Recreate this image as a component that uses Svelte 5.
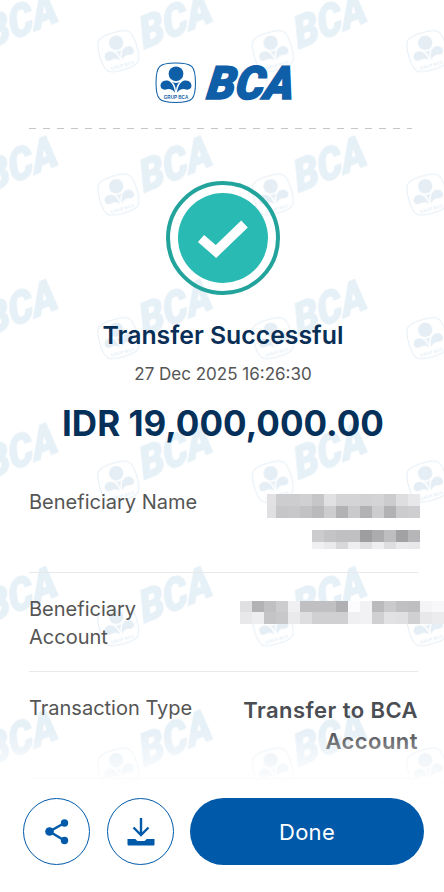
<script lang="ts">
  const nameTop = [
    [226, 205, 205, 208, 198, 225, 212, 212, 210, 212, 204, 222, 232],
    [224, 198, 200, 194, 186, 205, 178, 202, 178, 205, 178, 204, 206]
  ]
  const nameBottom = [
    [204, 196, 192, 192, 158, 172, 190, 162, 182],
    [240, 234, 216, 238, 224, 238, 222, 234, 232]
  ]
  const account = [
    [224, 178, 192, 204, 240, 192, 192, 192, 176, 252, 242, 186, 202, 192, 190, 244, 248],
    [232, 238, 196, 200, 234, 222, 208, 208, 208, 240, 242, 208, 226, 224, 208, 232, 236]
  ]

  const shade = (v: number) => `rgb(${v},${v},${Math.min(255, v + 2)})`
</script>

{#snippet pixels(rows: number[][], kind: string)}
  <div class="pixels {kind}">
    {#each rows as row}
      <div class="px-row">
        {#each row as v}
          <span style="background:{shade(v)}"></span>
        {/each}
      </div>
    {/each}
  </div>
{/snippet}

{#snippet emblem(color: string)}
  <path d="M20 1C28 1 33 1.500 36 4.500C39 7.500 39.500 13 39.500 20.500C39.500 28 39 33 36 36C33 39 27 39.500 20 39.500C13 39.500 7.500 39 4.500 36C1.500 33 1 28 1 20.500C1 13 1.500 7.500 4.500 4.500C7.500 1.500 12 1 20 1Z" fill="none" stroke={color} stroke-width="1" />
  <circle cx="20.500" cy="11.500" r="7.200" fill={color} />
  <path d="M19.500 30C19 25 17 19 12 18C7 17.500 5 21 5.500 24C6 27 9 27.500 12 26.500C15 26 18 27.500 19.500 30Z" fill={color} />
  <path d="M21.500 30C22 25 24 19 29 18C34 17.500 36 21 35.500 24C35 27 32 27.500 29 26.500C26 26 23 27.500 21.500 30Z" fill={color} />
  <path d="M20.500 28C20 23 18.500 20.500 16 19C17 19.500 19 20.500 20.500 20.500C22 20.500 24 19.500 25 19C22.500 20.500 21 23 20.500 28Z" fill={color} />
{/snippet}

<main class="page">
  <svg class="watermark" width="444" height="892" aria-hidden="true">
    <defs>
      <pattern id="tile" x="95" y="-15" width="154.500" height="143.500" patternUnits="userSpaceOnUse">
        <g transform="translate(3 46) rotate(-16 20 20)" opacity="0.3">
          {@render emblem('#a9c6de')}
          <text x="20.500" y="36.500" class="mark-grup" fill="#a9c6de">GRUP BCA</text>
        </g>
        <g transform="translate(49 64) rotate(-22) skewX(-8)">
          <text class="mark-bca" textLength="76" lengthAdjust="spacingAndGlyphs">BCA</text>
        </g>
      </pattern>
    </defs>
    <rect width="444" height="892" fill="url(#tile)" />
  </svg>

  <div class="content">
    <header class="brand">
      <svg width="42" height="42" viewBox="0 0 41 41" aria-hidden="true">
        {@render emblem('#0f5ea8')}
        <text x="20.500" y="36.500" class="grup">GRUP BCA</text>
      </svg>
      <svg class="wordmark" width="96" height="42" aria-label="BCA">
        <g transform="translate(3 37) skewX(-8)">
          <text class="bca" textLength="87" lengthAdjust="spacingAndGlyphs">BCA</text>
        </g>
      </svg>
    </header>

    <div class="dash"></div>

    <section class="status">
      <div class="ring">
        <div class="disc">
          <svg width="52" height="40" viewBox="0 0 52 40" aria-hidden="true">
            <path d="M4 20.500L19 33.500L47.500 6" fill="none" stroke="#fff" stroke-width="9.500" />
          </svg>
        </div>
      </div>
      <h1>Transfer Successful</h1>
      <p class="date">27 Dec 2025 16:26:30</p>
      <p class="amount">IDR 19,000,000.00</p>
    </section>

    <section class="rows">
      <div class="row name">
        <span class="label">Beneficiary Name</span>
        <div class="values">
          {@render pixels(nameTop, 'name-top')}
          {@render pixels(nameBottom, 'name-bottom')}
        </div>
      </div>
      <div class="row acct">
        <span class="label">Beneficiary<br />Account</span>
        <div class="values">
          {@render pixels(account, 'acct-px')}
        </div>
      </div>
      <div class="row type">
        <span class="label">Transaction Type</span>
        <div class="value-text">
          <strong>Transfer to BCA</strong>
          <strong>Account</strong>
        </div>
      </div>
    </section>

    <footer class="actions">
      <button class="round" aria-label="Share">
        <svg width="26" height="26" viewBox="0 0 26 26" aria-hidden="true">
          <path d="M20.500 4L5.500 12.500L20.500 21.500" fill="none" stroke="#005aa9" stroke-width="2.500" />
          <circle cx="20.500" cy="4" r="3.700" fill="#005aa9" />
          <circle cx="5.500" cy="12.500" r="4.300" fill="#005aa9" />
          <circle cx="20.500" cy="21.500" r="3.700" fill="#005aa9" />
        </svg>
      </button>
      <button class="round" aria-label="Download">
        <svg width="30" height="30" viewBox="0 0 30 30" aria-hidden="true">
          <path d="M15 1V18M7.500 10.500L15 18L22.500 10.500" fill="none" stroke="#005aa9" stroke-width="2.400" />
          <path d="M1.500 22H9C10 22 10.500 24 12 24H18C19.500 24 20 22 21 22H28.500V27C28.500 28 28 28.500 27 28.500H3C2 28.500 1.500 28 1.500 27Z" fill="#005aa9" />
        </svg>
      </button>
      <button class="done">Done</button>
    </footer>
  </div>
</main>

<style>
  :global(body) {
    margin: 0;
    background: #fff;
  }

  .page {
    position: relative;
    width: 444px;
    height: 892px;
    overflow: hidden;
    background: #fff;
    font-family: Inter, 'Noto Sans', sans-serif;
  }

  .watermark {
    position: absolute;
    inset: 0;
  }

  .mark-bca {
    font-family: Roboto, sans-serif;
    font-size: 44px;
    font-weight: 900;
    font-style: italic;
    fill: #e6f0f7;
    stroke: #e6f0f7;
    stroke-width: 1.4px;
  }

  .mark-grup {
    font-family: 'Liberation Sans', sans-serif;
    font-size: 4.500px;
    font-weight: 700;
    text-anchor: middle;
  }

  .content {
    position: relative;
    display: flex;
    flex-direction: column;
    height: 100%;
  }

  .brand {
    display: flex;
    justify-content: center;
    align-items: center;
    gap: 6px;
    height: 42px;
    padding: 62px 0 0 10px;
  }

  .wordmark {
    overflow: visible;
  }

  .bca {
    font-family: Roboto, sans-serif;
    font-size: 46px;
    font-weight: 900;
    font-style: italic;
    fill: #0f5ea8;
    stroke: #0f5ea8;
    stroke-width: 1.6px;
  }

  .grup {
    font-family: 'Liberation Sans', sans-serif;
    font-size: 4.500px;
    font-weight: 700;
    text-anchor: middle;
    fill: #0f5ea8;
  }

  .dash {
    margin: 24px 32px 0 29px;
    height: 1px;
    background: repeating-linear-gradient(90deg, #c6c6c6 0 7px, transparent 7px 14px);
  }

  .status {
    display: flex;
    flex-direction: column;
    align-items: center;
    padding-left: 2px;
  }

  .ring {
    display: flex;
    align-items: center;
    justify-content: center;
    box-sizing: border-box;
    width: 114px;
    height: 114px;
    margin-top: 52px;
    border: 4px solid #22a39b;
    border-radius: 50%;
  }

  .disc {
    display: flex;
    align-items: center;
    justify-content: center;
    width: 90px;
    height: 90px;
    border-radius: 50%;
    background: #2abab4;
  }

  h1 {
    margin: 25px 0 0;
    font-size: 24.800px;
    line-height: 30px;
    font-weight: 600;
    color: #0a2f57;
  }

  .date {
    margin: 13px 0 0;
    font-size: 17px;
    line-height: 22px;
    color: #555;
  }

  .amount {
    margin: 18px 0 0;
    font-size: 35px;
    line-height: 40px;
    font-weight: 700;
    color: #04305a;
  }

  .rows {
    flex: 1;
    margin-top: 27px;
    padding: 0 26px 0 29px;
  }

  .row {
    display: flex;
    justify-content: space-between;
    box-sizing: border-box;
    border-bottom: 1px solid #e9e9e9;
  }

  .name {
    height: 103px;
    padding-top: 18px;
  }

  .name .values {
    margin: 6px -2px 0 0;
    gap: 12px;
  }

  .acct {
    height: 99px;
    padding-top: 22px;
  }

  .acct .values {
    margin: 6px -26px 0 0;
  }

  .type {
    height: 107px;
    padding-top: 22px;
  }

  .label {
    font-size: 20px;
    line-height: 28px;
    color: #555;
  }

  .values {
    display: flex;
    flex-direction: column;
    align-items: flex-end;
  }

  .pixels {
    display: flex;
    flex-direction: column;
    align-items: flex-end;
    overflow: hidden;
  }

  .name-top {
    width: 153px;
  }

  .px-row {
    display: flex;
    flex: none;
  }

  .px-row span {
    flex: none;
    width: 12px;
    height: 12px;
  }

  .name-bottom .px-row:last-child span {
    height: 7px;
  }

  .acct-px .px-row:first-child span {
    height: 11px;
  }

  .value-text {
    display: flex;
    flex-direction: column;
    align-items: flex-end;
    margin-top: 1px;
    font-size: 22px;
    line-height: 31px;
    letter-spacing: 0.45px;
    color: #4a4d52;
  }

  .value-text strong {
    font-weight: 600;
  }

  .actions {
    position: relative;
    display: flex;
    gap: 17px;
    padding: 0 20px 27px 23px;
    background: #fff;
  }

  /* content fades out behind the action bar */
  .actions::before {
    content: '';
    position: absolute;
    left: 0;
    right: 0;
    bottom: 100%;
    height: 68px;
    background: linear-gradient(to bottom, rgba(255, 255, 255, 0), #fff 88%);
    pointer-events: none;
  }

  button {
    padding: 0;
    font-family: inherit;
    cursor: pointer;
  }

  .round {
    display: flex;
    align-items: center;
    justify-content: center;
    flex: none;
    box-sizing: border-box;
    width: 67px;
    height: 67px;
    border: 1.800px solid #005aa9;
    border-radius: 50%;
    background: #fff;
  }

  .done {
    flex: 1;
    height: 67px;
    margin-left: -1px;
    border: 0;
    border-radius: 34px;
    background: #005aa9;
    color: #fff;
    font-size: 22px;
    font-weight: 400;
    letter-spacing: 0.3px;
  }
</style>
